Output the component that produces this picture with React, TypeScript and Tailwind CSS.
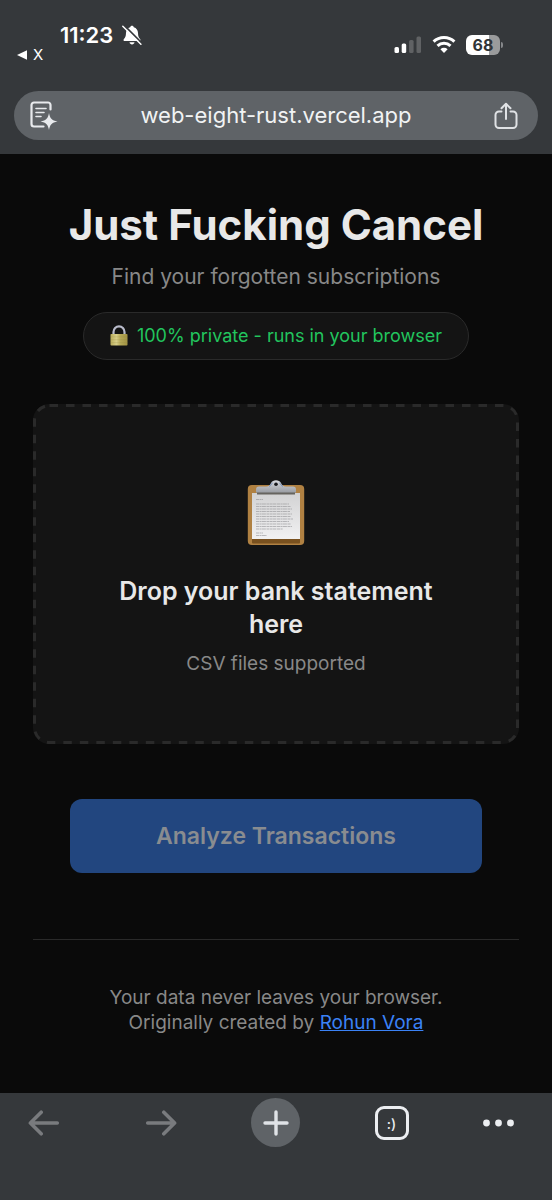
import { useState } from 'react'

const BellOffIcon = () => (
  <svg viewBox="0 0 20 20" className="size-5" aria-hidden="true">
    <path d="M10 .8c1 0 1.700.6 1.800 1.500 2.700.8 4.100 3 4.200 5.700.1 3.300.8 4.600 2.100 5.900.7.8.5 2.100-.8 2.100H2.700c-1.300 0-1.500-1.300-.8-2.100C3.200 12.600 3.900 11.300 4 8c.1-2.700 1.500-4.900 4.200-5.700C8.300 1.400 9 .8 10 .8Z" fill="#fff" />
    <path d="M7.500 17.200h5c-.3 1.400-1.200 2.200-2.500 2.200s-2.200-.8-2.500-2.200Z" fill="#fff" />
    <path d="M2.700.9 20 18.200" stroke="#35383b" strokeWidth="1.800" />
    <path d="M.8 1.200 18.900 19.300" stroke="#fff" strokeWidth="1.500" strokeLinecap="round" />
  </svg>
)

const SignalIcon = () => (
  <svg viewBox="0 0 28 18" className="w-7 h-[18px]" aria-hidden="true">
    <rect x="0.500" y="11" width="4.500" height="6" rx="1.500" fill="#fff" />
    <rect x="7.700" y="7.500" width="4.500" height="9.500" rx="1.500" fill="#fff" />
    <rect x="15.100" y="4" width="4.500" height="13" rx="1.500" fill="#606264" />
    <rect x="22.500" y="0.500" width="4.500" height="16.500" rx="1.500" fill="#606264" />
  </svg>
)

const WifiIcon = () => (
  <svg viewBox="0 0 24 18" className="w-6 h-[18px]" fill="none" stroke="#fff" strokeWidth="3" aria-hidden="true">
    <path d="M1.600 5.700a15 15 0 0 1 20.800 0" />
    <path d="M5.500 9.900a9.400 9.400 0 0 1 13 0" />
    <path d="M12 17 8.400 13.300a5.200 5.200 0 0 1 7.200 0Z" fill="#fff" stroke="none" />
  </svg>
)

const Battery = () => (
  <div className="flex items-center gap-px">
    <div className="flex h-5 w-[34px] items-center justify-center rounded-[6px] bg-linear-to-r from-white from-68% to-[#9a9b9c] to-68% text-[16px] leading-5 font-bold text-[#303437]">
      68
    </div>
    <div className="h-[6px] w-[2px] rounded-r-full bg-[#85878a]" />
  </div>
)

const ReaderIcon = () => (
  <svg viewBox="0 0 28 30" className="w-7 h-[30px]" fill="none" stroke="#e8eaed" strokeLinecap="round" aria-hidden="true">
    <path d="M20.500 8.500V4a2.500 2.500 0 0 0-2.500-2.500H4A2.500 2.500 0 0 0 1.500 4v19A2.500 2.500 0 0 0 4 25.500h9.500" strokeWidth="2.200" />
    <path d="M6 7.500h10M6 11.500h8M6 15.500h5" strokeWidth="1.600" />
    <path d="M19 12c.9 5.200 2.700 7.300 8.500 8.500-5.800 1.200-7.600 3.300-8.500 8.500-.9-5.200-2.700-7.300-8.500-8.500 5.800-1.200 7.600-3.300 8.500-8.500Z" fill="#e8eaed" stroke="none" />
  </svg>
)

const ShareIcon = () => (
  <svg viewBox="0 0 24 28" className="w-6 h-7" fill="none" stroke="#e0e2e5" strokeWidth="2" strokeLinecap="round" strokeLinejoin="round" aria-hidden="true">
    <path d="M7.500 9.500H5A3.500 3.500 0 0 0 1.500 13v9.500A3.500 3.500 0 0 0 5 26h14a3.500 3.500 0 0 0 3.500-3.500V13A3.500 3.500 0 0 0 19 9.500h-2.500" />
    <path d="M12 17V2M7.500 6.300 12 1.800l4.500 4.500" />
  </svg>
)

const LockIcon = () => (
  <svg viewBox="0 0 18 22" className="w-[18px] h-[22px]" aria-hidden="true">
    <defs>
      <linearGradient id="lockBody" x1="0" x2="1">
        <stop offset="0" stopColor="#b9ad5c" />
        <stop offset=".35" stopColor="#d8cf88" />
        <stop offset=".6" stopColor="#b5a856" />
        <stop offset="1" stopColor="#a29343" />
      </linearGradient>
    </defs>
    <path d="M3.500 10V7a5.500 5.700 0 0 1 11 0v3" fill="none" stroke="#b9bccb" strokeWidth="2.200" />
    <rect x=".5" y="9" width="17" height="11.500" rx=".8" fill="url(#lockBody)" />
    <path d="M.5 11.800h17M.5 14.700h17M.5 17.600h17" stroke="#8f8340" strokeWidth=".5" opacity=".4" />
  </svg>
)

const ClipboardIcon = () => (
  <svg viewBox="0 0 58 66" className="w-[58px] h-[66px]" aria-hidden="true">
    <defs>
      <linearGradient id="paper" x1="0" y1="0" x2="0" y2="1">
        <stop offset="0" stopColor="#d2d2d3" />
        <stop offset="1" stopColor="#f1f1f2" />
      </linearGradient>
      <linearGradient id="clip" x1="0" y1="0" x2="0" y2="1">
        <stop offset="0" stopColor="#d7dae0" />
        <stop offset="1" stopColor="#9a9da3" />
      </linearGradient>
    </defs>
    <rect x=".8" y="5" width="56.400" height="60" rx="4" fill="#b08142" />
    <path d="M5 59h48v3.500a1 1 0 0 1-1 1H6a1 1 0 0 1-1-1Z" fill="#79511f" />
    <path d="M5 13h48v46H5Z" fill="url(#paper)" />
    <path d="M10 11.500h38v3H10Z" fill="#66645f" />
    <path d="M9 12.500V9.500a3 3 0 0 1 3-3h7c3 0 4-1.500 5-3.500C25 1.200 26.800.2 29 .2s4 1 5 2.800c1 2 2 3.500 5 3.500h7a3 3 0 0 1 3 3v3Z" fill="url(#clip)" />
    <path d="M22 6.300c2-.8 2.500-2 3.400-3.500M36 6.300c-2-.8-2.500-2-3.400-3.500" stroke="#7892bd" strokeWidth="1" fill="none" />
    <circle cx="29" cy="4.200" r="1.800" fill="#17181c" />
    <path d="M9 19.500h7M9 24h33M9 26.500h35M9 29h36M9 31.500h34M9 34h36M9 36.500h35M9 39h37M9 41.500h33M9 44h35M9 46.500h36M9 49h27M9 53h7M9 55.500h11" stroke="#929295" strokeWidth=".9" strokeDasharray="3 .5 2 .4 4 .6" opacity=".65" />
  </svg>
)

const ArrowIcon = ({ className = '' }) => (
  <svg viewBox="0 0 32 26" className={`w-8 h-[26px] ${className}`} fill="none" stroke="#797b7e" strokeWidth="3.600" strokeLinecap="round" strokeLinejoin="round" aria-hidden="true">
    <path d="M29.300 13H2.500M13.200 2.200 2.400 13l10.800 10.800" />
  </svg>
)

const PlusIcon = () => (
  <svg viewBox="0 0 26 26" className="size-[26px]" fill="none" stroke="#e0e3e7" strokeWidth="3.400" strokeLinecap="round" aria-hidden="true">
    <path d="M13 2v22M2 13h22" />
  </svg>
)

const DotsIcon = () => (
  <svg viewBox="0 0 32 8" className="w-8 h-2" fill="#eceef1" aria-hidden="true">
    <circle cx="3.500" cy="4" r="3.400" />
    <circle cx="15.500" cy="4" r="3.400" />
    <circle cx="27.500" cy="4" r="3.400" />
  </svg>
)

const BrowserHeader = () => (
  <header className="bg-[#35383b] px-[14px] pb-[14px]">
    <div className="flex h-[91px] items-start justify-between pt-[23px] pr-[35px] text-white">
      <div>
        <div className="flex items-center gap-[9px] pl-[46px]">
          <span className="text-[22px] leading-6 font-semibold">11:23</span>
          <BellOffIcon />
        </div>
        <div className="flex items-center gap-[6px] pl-[3px] text-[15px] leading-4">
          <svg viewBox="0 0 10 10" className="size-[10px]" aria-hidden="true">
            <path d="M0 5 10 .3v9.400Z" fill="#fff" />
          </svg>
          <span>X</span>
        </div>
      </div>
      <div className="flex items-center gap-[10px] pt-3">
        <SignalIcon />
        <WifiIcon />
        <Battery />
      </div>
    </div>
    <div className="flex h-[49px] items-center justify-between rounded-full bg-[#5f6367] pr-5 pl-4">
      <button aria-label="Reader mode">
        <ReaderIcon />
      </button>
      <button className="pb-[2px] text-[22px] leading-7 text-[#f1f3f4]">web-eight-rust.vercel.app</button>
      <button aria-label="Share">
        <ShareIcon />
      </button>
    </div>
  </header>
)

const BrowserToolbar = () => (
  <nav className="flex items-start justify-between bg-[#35383b] pt-[5px] pr-[37px] pb-[53px] pl-7">
    <button aria-label="Back" className="flex h-[49px] items-center">
      <ArrowIcon />
    </button>
    <button aria-label="Forward" className="flex h-[49px] items-center pl-[10px]">
      <ArrowIcon className="rotate-180" />
    </button>
    <button aria-label="New tab" className="flex size-[49px] items-center justify-center rounded-full bg-[#5f6367]">
      <PlusIcon />
    </button>
    <button aria-label="Tabs" className="flex h-[49px] items-center">
      <span className="flex size-[34px] items-center justify-center rounded-[9px] border-3 border-[#eceef1] pt-[3px] text-[14px] leading-4 font-medium text-[#eceef1]">
        :)
      </span>
    </button>
    <button aria-label="More" className="flex h-[49px] items-center">
      <DotsIcon />
    </button>
  </nav>
)

const App = () => {
  const [file, setFile] = useState<File | null>(null)

  return (
    <div className="flex min-h-screen flex-col bg-[#0a0a0a] font-['Inter','Liberation_Sans',sans-serif]">
      <BrowserHeader />

      <main className="flex-1 px-[33px] pt-11 text-center">
        <h1 className="text-[42px] leading-[54px] font-bold text-[#e8e8e8]">Just Fucking Cancel</h1>
        <p className="mt-2 text-[21px] leading-[34px] text-[#888]">Find your forgotten subscriptions</p>

        <div className="mx-auto mt-[18px] flex h-12 w-fit items-center gap-[9px] rounded-full border border-[#2a2a2a] bg-[#141414] px-[26px]">
          <LockIcon />
          <span className="text-[18px] leading-6 text-[#22c55e]">100% private - runs in your browser</span>
        </div>

        <label className="relative mt-11 flex h-[340px] flex-col items-center rounded-2xl bg-[#141414] px-[69px] pt-[76px]">
          <svg className="absolute inset-0 size-full" fill="none" stroke="#2a2a2a" strokeWidth="3" strokeDasharray="8.500 8" aria-hidden="true">
            <rect x="1.500" y="1.500" rx="15" className="h-[calc(100%-3px)] w-[calc(100%-3px)]" />
          </svg>
          <input type="file" accept=".csv" className="sr-only" onChange={(e) => setFile(e.target.files?.[0] ?? null)} />
          <ClipboardIcon />
          <span className="mt-[29px] text-[25px] leading-[33px] font-semibold text-[#e8e8e8]">Drop your bank statement here</span>
          <span className="mt-2 text-[19px] leading-[30px] text-[#888]">CSV files supported</span>
        </label>

        <div className="mt-[55px] px-[37px]">
          <button disabled={!file} className="h-[74px] w-full rounded-xl bg-[#3b82f6] text-[23px] font-semibold text-[#e8e8e8] disabled:bg-[#22467f] disabled:text-[#898c90]">
            Analyze Transactions
          </button>
        </div>

        <footer className="mt-[66px] border-t border-[#2a2a2a] pt-[45px] pb-14 text-[19px] leading-[25px] text-[#888]">
          <p>Your data never leaves your browser.</p>
          <p>
            Originally created by <a href="#" className="text-[#3b82f6] underline">Rohun Vora</a>
          </p>
        </footer>
      </main>

      <BrowserToolbar />
    </div>
  )
}

export default App
